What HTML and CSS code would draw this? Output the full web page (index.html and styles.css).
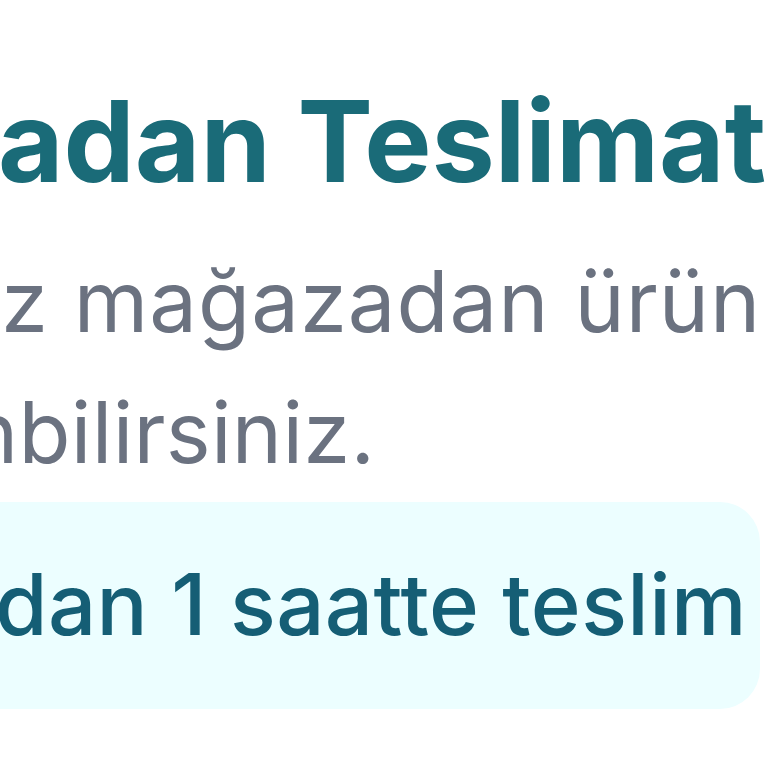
FILE: index.html
```html
<!DOCTYPE html>
<html lang="tr">
<head>
<meta charset="utf-8">
<link rel="stylesheet" href="styles.css">
</head>
<body>
<main class="card">
  <h1 class="title">adan Teslimat</h1>
  <p class="desc"><span class="line line-1">z mağazadan ürün</span><span class="line line-2">nbilirsiniz.</span></p>
  <div class="note"><span class="note-text">dan 1 saatte teslim</span></div>
</main>
</body>
</html>
```

FILE: styles.css
```css
html, body {
  margin: 0;
  padding: 0;
  background: #ffffff;
  overflow: hidden;
  width: 768px;
  height: 768px;
}
.card {
  font-family: Inter, "Noto Sans", sans-serif;
  padding-top: 73px;
  margin-left: -2px;
  white-space: nowrap;
}
.title {
  margin: 0;
  font-size: 113px;
  line-height: 136px;
  font-weight: 700;
  color: #1a6b78;
}
.desc {
  margin: 27px 0 0 0;
  font-size: 85px;
  line-height: 131px;
  font-weight: 400;
  color: #6b7280;
}
.line {
  display: block;
}
.line-1 {
  margin-left: 3px;
  letter-spacing: 1px;
}
.line-2 {
  margin-left: -30px;
  letter-spacing: 0.3px;
}
.note {
  margin: 4px 0 0 -60px;
  width: 822px;
  height: 207px;
  box-sizing: border-box;
  padding: 37px 0 0 60px;
  background: #ecfeff;
  border-radius: 40px;
}
.note-text {
  display: block;
  font-size: 85px;
  line-height: 131px;
  font-weight: 500;
  color: #155e75;
  margin-left: -3px;
  letter-spacing: 0.4px;
}
```
